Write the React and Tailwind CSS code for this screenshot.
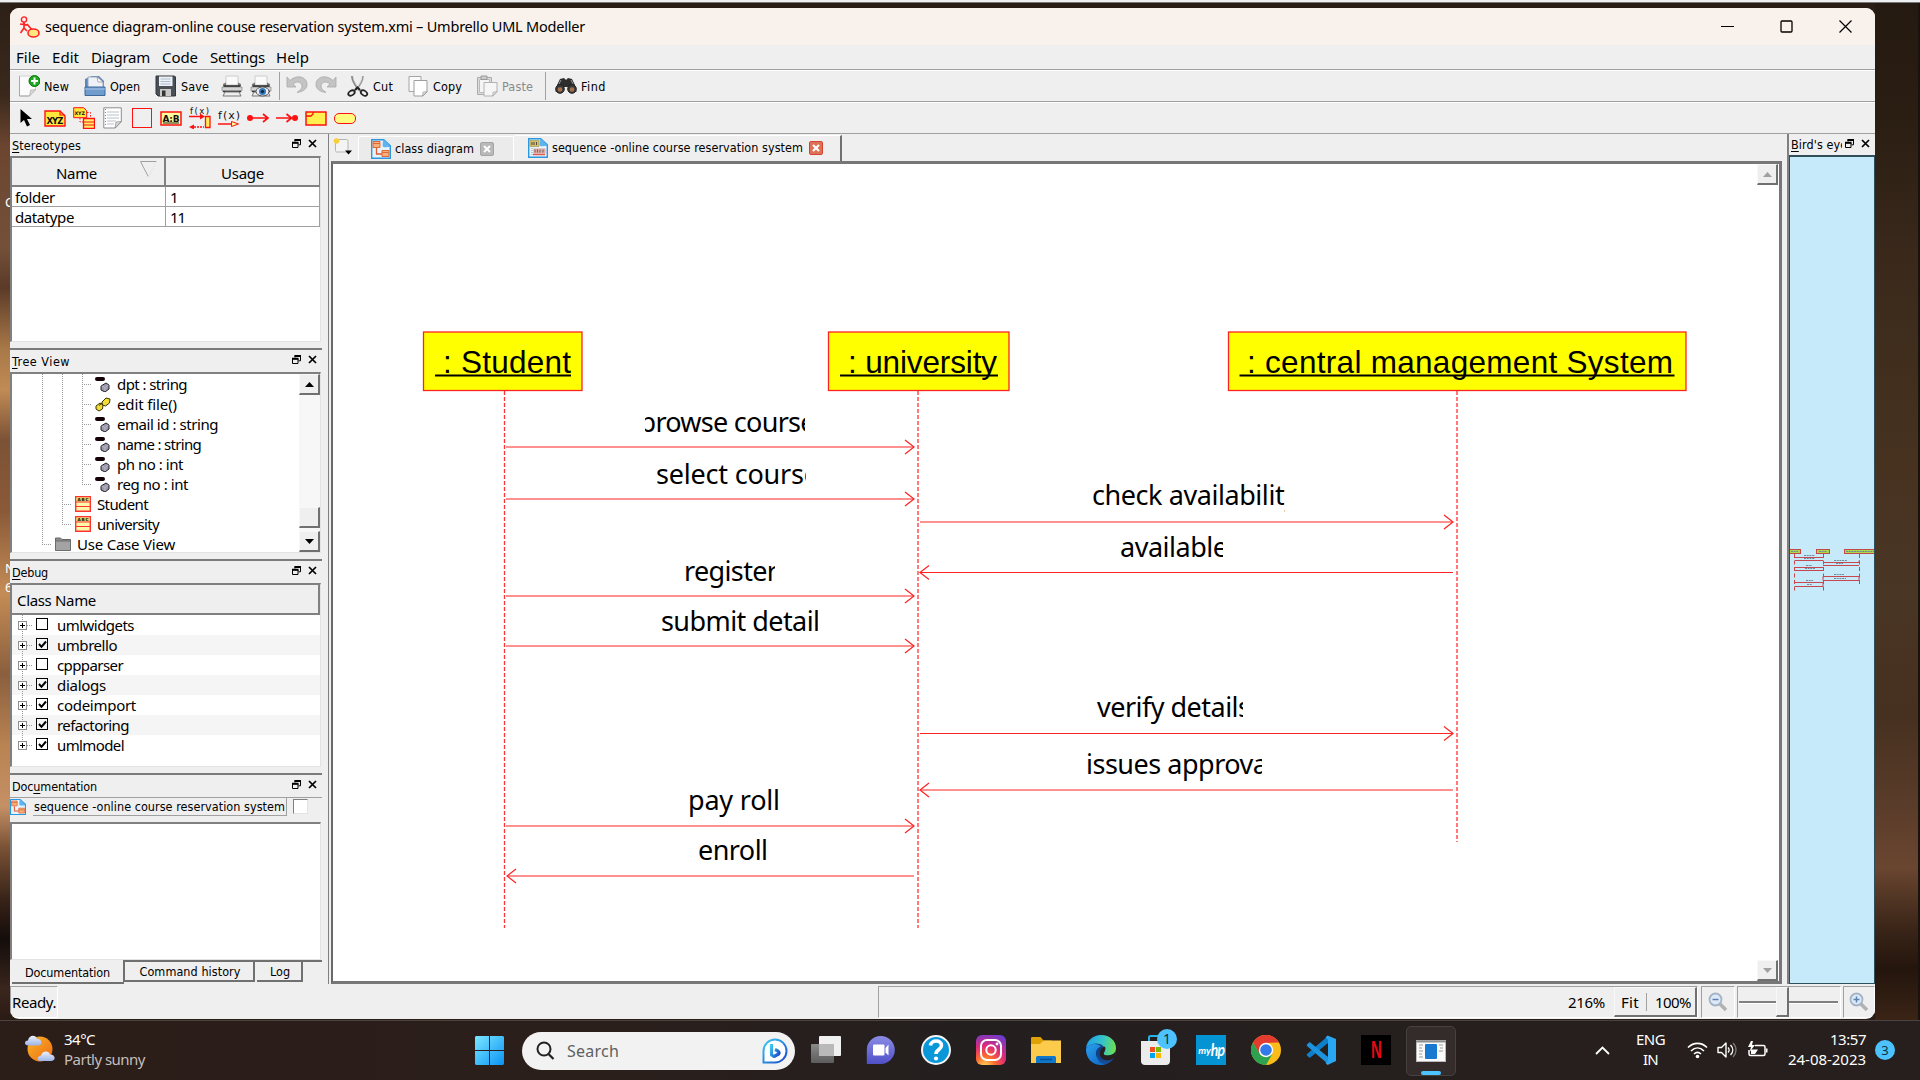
import React, { useLayoutEffect, useRef, useState } from "react";

/* Text run tracked so that it fills the given width */
function T({ w, className = "", children }) {
  const ref = useRef(null);
  const [ls, setLs] = useState(0);
  useLayoutEffect(() => {
    const el = ref.current;
    const n = el.textContent.length;
    if (w && n) setLs((w - el.getBoundingClientRect().width) / n);
  }, [w]);
  return (
    <span ref={ref} className={`inline-block shrink-0 whitespace-pre ${className}`} style={{ letterSpacing: ls }}>
      {children}
    </span>
  );
}

const Svg = ({ s = 22, w, h, className = "", children }) => (
  <svg width={w || s} height={h || s} viewBox={`0 0 ${w || s} ${h || s}`} className={`shrink-0 ${className}`} fill="none">
    {children}
  </svg>
);

/* ---------- application icons ---------- */
const AppIcon = () => (
  <Svg s={22}>
    <circle cx="5" cy="3.500" r="2.600" stroke="#f22" strokeWidth="1.400" />
    <path d="M5 6v6M1 8l8 1M5 12l-3.500 5M5 12l3 3M8 8l5 6" stroke="#f22" strokeWidth="1.600" />
    <ellipse cx="14.500" cy="17" rx="5.500" ry="4" fill="#ffe680" stroke="#f22" strokeWidth="1.600" />
  </Svg>
);
const NewIcon = () => (
  <Svg s={22}>
    <path d="M1.500 1h16v14l-6 6h-10z" fill="#fcfcfc" stroke="#d0d0d0" />
    <path d="M1.500 1v20h10" stroke="#a8a8a8" />
    <path d="M17.500 14.500l-6 6.500 1-6z" fill="#d8d8d8" stroke="#aaa" strokeWidth=".6" />
    <circle cx="16.500" cy="6" r="5.500" fill="#1fa51f" stroke="#087808" />
    <path d="M16.500 2.500v7M13 6h7" stroke="#fff" strokeWidth="2" />
  </Svg>
);
const OpenIcon = () => (
  <Svg s={22}>
    <path d="M1 4l7-3h7l5 5v8H1z" fill="#5c86b8" />
    <path d="M4 2h10l5 5v8H4z" fill="#eef2f8" stroke="#9ab" />
    <path d="M13 2l1 5 5 0z" fill="#fff" stroke="#889" strokeWidth=".7" />
    <path d="M1 12h20v8.500H1z" fill="#6f9bcd" stroke="#3d6898" />
    <path d="M1 14h20" stroke="#a6c6ea" />
  </Svg>
);
const SaveIcon = () => (
  <Svg s={22}>
    <path d="M1 1h18.500l1 1v19H3l-2-2z" fill="#4b4f56" stroke="#33363b" />
    <path d="M4 1.500h13.500V11H4z" fill="#eef2f7" />
    <path d="M5.500 4h10M5.500 6.500h10M5.500 9h10" stroke="#a9bbd0" />
    <path d="M5 14h11v7H5z" fill="#c8c8c8" />
    <path d="M7 15.500h3.500V21H7z" fill="#333" />
  </Svg>
);
const PrintIcon = ({ preview }) => (
  <Svg s={22}>
    <path d="M5 1h12v9H5z" fill="#fafafa" stroke="#ccc" />
    <path d="M2 9l3-1.500v3h12v-3L20 9v4H2z" fill="#777" />
    <path d="M1 12h20v4H1z" fill="#d5d5d5" stroke="#777" strokeWidth=".6" />
    <path d="M3 11h16M2 16.500h18" stroke="#333" strokeWidth="1.600" />
    <path d="M4 17h14l2 4H2z" fill="#eee" stroke="#777" />
    {preview && (
      <>
        <ellipse cx="12.500" cy="16.500" rx="6.500" ry="4.500" fill="#eef" stroke="#555" />
        <circle cx="12.500" cy="16.500" r="3.500" fill="#3478b8" />
        <circle cx="12.500" cy="16.500" r="1.500" fill="#123" />
      </>
    )}
  </Svg>
);
const UndoIcon = ({ flip }) => (
  <Svg s={22} className={flip ? "-scale-x-100" : ""}>
    <path d="M1 2v10l9 0-3-3c5-4 9-1 9 2 0 3-2 4-5 6.500 7-1 10-4 10-8 0-7-9-11-17-4z" fill="#c4c4c4" stroke="#a9a9a9" strokeWidth=".8" />
  </Svg>
);
const CutIcon = () => (
  <Svg s={22}>
    <path d="M5 1c0 5 3 9 6 13l4 3" stroke="#aaa" strokeWidth="2.200" />
    <path d="M16 1c0 5-3 9-6 13l-4 3" stroke="#c9c9c9" strokeWidth="2.200" />
    <path d="M5 1c0 5 3 9 6 13M16 1c0 5-3 9-6 13" stroke="#666" strokeWidth=".6" />
    <ellipse cx="4.500" cy="18" rx="3.500" ry="2.300" stroke="#222" strokeWidth="1.800" transform="rotate(-35 4.500 18)" />
    <ellipse cx="17" cy="18" rx="3.500" ry="2.300" stroke="#222" strokeWidth="1.800" transform="rotate(35 17 18)" />
    <path d="M8 15l2.500-2.500L13 15" stroke="#222" strokeWidth="2" />
  </Svg>
);
const CopyIcon = () => (
  <Svg s={22}>
    <path d="M2 1.500h12v15H2z" fill="#fbfbfb" stroke="#a5a5a5" />
    <path d="M7 5.500h13V17l-4 4H7z" fill="#fff" stroke="#9d9d9d" />
    <path d="M20 16.500L15.500 21l.5-4z" fill="#ddd" stroke="#999" strokeWidth=".6" />
  </Svg>
);
const PasteIcon = () => (
  <Svg s={22}>
    <path d="M1.500 2.500h14v17h-14z" fill="#ddd" stroke="#aaa" />
    <path d="M3.500 4.500h10v13h-10z" fill="#f5f5f5" stroke="#bbb" />
    <path d="M5 1h6v3.500H5z" fill="#ccc" stroke="#999" />
    <path d="M8 7.500h13V17l-4 4H8z" fill="#f6f6f6" stroke="#b3b3b3" />
    <path d="M21 16.500L16.500 21l.5-4z" fill="#ddd" stroke="#aaa" strokeWidth=".6" />
  </Svg>
);
const FindIcon = () => (
  <Svg s={22}>
    <path d="M5 4l4-1 2 2 2-2 4 1 3 6 1.500 7H14l-1-5h-4l-1 5H.5L2 10z" fill="#2d2d2d" />
    <circle cx="5" cy="14" r="4.300" fill="#3a3a3a" stroke="#222" />
    <circle cx="17" cy="14" r="4.300" fill="#3a3a3a" stroke="#222" />
    <circle cx="5" cy="14.500" r="2.300" fill="#a8704a" />
    <circle cx="17" cy="14.500" r="2.300" fill="#a8704a" />
    <path d="M6 5l-2 4M16 5l2 4" stroke="#999" />
  </Svg>
);

/* ---------- diagram tool icons ---------- */
const tiny = { fontFamily: "DejaVu Sans, sans-serif", fontWeight: 700, fill: "#111" };
const PointerIcon = () => (
  <Svg w={13} h={18}>
    <path d="M.5 0v14l3.500-3 3 6.500 3-1.500-3-6h5z" fill="#000" />
  </Svg>
);
const XyzIcon = () => (
  <Svg w={22} h={17}>
    <path d="M1 1h15l5 5v10H1z" fill="#ffe83c" stroke="#f11" strokeWidth="1.400" />
    <path d="M16 1v4h5" stroke="#f11" strokeWidth="1.200" />
    <text x="2.500" y="13.500" fontSize="8.500" textLength="17" {...tiny}>XYZ</text>
  </Svg>
);
const XyzClassIcon = () => (
  <Svg s={22}>
    <path d="M.7.700h10l3 3v7h-13z" fill="#ffe83c" stroke="#f11" />
    <text x="1.500" y="8" fontSize="4.800" textLength="10.500" {...tiny}>XYZ</text>
    <path d="M14 5.500h3.500v5M7 11v4h3" stroke="#f11" strokeDasharray="1.500 1.500" />
    <path d="M10.500 11.500h11v10h-11z" fill="#fff06a" stroke="#f11" strokeWidth="1.300" />
    <path d="M10.500 15h11M10.500 18h11" stroke="#f11" />
  </Svg>
);
const NoteIcon = () => (
  <Svg w={20} h={22}>
    <path d="M.8.800h17.500v14l-6 6.200H.8z" fill="#fff" stroke="#8d8d8d" />
    <path d="M4 5h12M4 8h12M4 11h12M4 14h9M4 17h7" stroke="#b9c0c8" />
    <path d="M2.500 2v18" stroke="#888" strokeDasharray="1 2" />
    <path d="M18.300 14.500L12 21l1-6z" fill="#d9d9d9" stroke="#888" strokeWidth=".7" />
  </Svg>
);
const AbIcon = () => (
  <Svg w={22} h={15}>
    <path d="M1 1h20v13H1z" fill="#fffa9a" stroke="#f11" strokeWidth="1.500" />
    <text x="2.500" y="10.500" fontSize="9" textLength="17" {...tiny}>A:B</text>
    <path d="M3 12h16" stroke="#222" />
  </Svg>
);
const FxSyncIcon = () => (
  <Svg s={22}>
    <text x="1" y="6.500" fontSize="8.500" textLength="19" {...tiny} fontWeight="400">f(x)</text>
    <path d="M0 9.500h12" stroke="#f11" strokeWidth="1.500" />
    <path d="M11 6.500l5 3-5 3z" fill="#f11" />
    <path d="M16.500 9.500h4.500v11h-4.500z" fill="#ffee55" stroke="#f11" strokeWidth="1.300" />
    <path d="M5 20h10" stroke="#f11" strokeWidth="1.500" strokeDasharray="2 1" />
    <path d="M5 17.500v5L0 20z" fill="#f11" />
  </Svg>
);
const FxIcon = () => (
  <Svg s={22}>
    <text x="0" y="11.500" fontSize="11" textLength="22" {...tiny} fontWeight="400">f(x)</text>
    <path d="M0 17h15" stroke="#f11" strokeWidth="1.500" />
    <path d="M13.500 14.500l7 2.500-7 2.500z" fill="#ff9" stroke="#f11" />
  </Svg>
);
const FoundIcon = () => (
  <Svg w={22} h={12}>
    <circle cx="3" cy="6" r="3" fill="#f11" />
    <path d="M3 6h18M16 2l5 4-5 4" stroke="#f11" strokeWidth="1.700" />
  </Svg>
);
const LostIcon = () => (
  <Svg w={22} h={12}>
    <circle cx="19" cy="6" r="3" fill="#f11" />
    <path d="M0 6h16M10.500 2l5 4-5 4" stroke="#f11" strokeWidth="1.700" />
  </Svg>
);
const FragmentIcon = () => (
  <Svg w={22} h={15}>
    <path d="M1 1h20v13H1z" fill="#fff04f" stroke="#f11" strokeWidth="1.500" />
    <path d="M1 5h5l2-2V1" stroke="#f11" strokeWidth="1.300" />
  </Svg>
);

const DiagramIcon = ({ s = 20, seq }) => (
  <svg width={s} height={s} viewBox="0 0 20 20" className="shrink-0" fill="none">
    <path d="M.7.700h12l6.600 6V19.300H.700z" fill="#e6f3fd" stroke="#2a97e0" strokeWidth="1.400" />
    <path d="M12 .700c0 4-1 6 0 7 1.500 1 4 .3 7.300.3C17 4 15 2 12 .700z" fill="#5db4ef" />
    {seq ? (
      <>
        <path d="M2 2.500h9v6H2z" fill="#d3c26a" stroke="#9c8b44" strokeWidth=".6" />
        <path d="M4 4v3M6 4v3M8.500 4v3" stroke="#544" />
        <path d="M4 10v8" stroke="#999" strokeDasharray="1 1" />
        <path d="M5.500 10.500h12v5h-12z" fill="#e0aaa2" />
        <path d="M7 11.500v3M9.500 11.500v3M12 11.500v3M15 11.500v3" stroke="#666" />
        <path d="M5 16.500h12" stroke="#e55a4f" strokeWidth="1.600" />
      </>
    ) : (
      <>
        <path d="M2 2.500h7v6H2zM11 11.500h7v6h-7z" fill="#f6b07c" stroke="#df6a36" />
        <path d="M2 4.500h7M11 13.500h7" stroke="#df6a36" />
        <path d="M5.500 9v6H11" stroke="#df5a30" strokeWidth="1.300" />
      </>
    )}
  </svg>
);

/* ---------- small window controls ---------- */
const FloatIcon = () => (
  <Svg s={9}>
    <path d="M3 .8h5.500v5H6.500M3 .5v2M.5 3.800h5.500v4.700H.5z" stroke="#000" />
    <path d="M2.500 1h6.500M0 3.700h6.500" stroke="#000" strokeWidth="2" />
  </Svg>
);
const CloseIcon = () => (
  <Svg s={9}>
    <path d="M1 1l7 7M8 1l-7 7" stroke="#000" strokeWidth="1.700" />
  </Svg>
);

const tah = "font-['DejaVu_Sans_Condensed','Noto_Sans',sans-serif] text-[12.500px] leading-[16px]";

function DockTitle({ h, children }) {
  return (
    <div className={`flex shrink-0 items-center bg-[#efefef] pt-px pr-[5px] pl-[2px] text-black ${h}`}>
      {children}
      <div className="mb-[4px] ml-auto flex gap-[7px]">
        <FloatIcon />
        <CloseIcon />
      </div>
    </div>
  );
}

const raised = "border-t border-l border-r-2 border-b-2 border-t-[#f8f8f8] border-l-[#f8f8f8] border-r-[#707070] border-b-[#707070] bg-[#efefef]";

function ArrowButton({ down, gray, size }) {
  const c = gray ? "#a0a0a0" : "#000";
  return (
    <div className={`flex items-center justify-center ${raised} ${size}`}>
      <Svg w={9} h={5}>
        <path d={down ? "M0 0h9L4.500 5z" : "M0 5h9L4.500 0z"} fill={c} />
      </Svg>
    </div>
  );
}

/* ---------- tree ---------- */
function Guide({ kind }) {
  return (
    <Svg s={20}>
      <path d={kind === "elbow" ? "M10.500 0v11" : "M10.500 0v20"} stroke="#9a9a9a" strokeDasharray="1 1" />
      {kind !== "line" && <path d="M10 10.500h10" stroke="#9a9a9a" strokeDasharray="1 1" />}
    </Svg>
  );
}
const AttrIcon = () => (
  <Svg s={16}>
    <rect x="0" y="1" width="10" height="4" rx="2" fill="#120006" />
    <path d="M6 10l5-3 3 2v4l-4 3-4-2z" fill="#9a97ac" stroke="#222" />
    <path d="M6.500 10l3.500 1.500 3.500-2.500M10 11.500V15" stroke="#c5c3d2" strokeWidth=".7" />
  </Svg>
);
const OpIcon = () => (
  <Svg s={16}>
    <path d="M1 10l4-3 3 2-.5 4-3.500 2-3-2z" fill="#f2dc3c" stroke="#3a3500" />
    <path d="M7 6l4-4 4 1-.5 4-4 3-3-1z" fill="#f2dc3c" stroke="#3a3500" />
    <path d="M4 9.500l3-2.500" stroke="#3a3500" />
  </Svg>
);
const ClassIcon = () => (
  <Svg s={16}>
    <path d="M.7.700h14.600v14.600H.7z" fill="#fff8a8" stroke="#f33" strokeWidth="1.400" />
    <path d="M1.400 1.400h13.200v4H1.400z" fill="#e8d060" />
    <text x="2.500" y="5" fontSize="4.200" textLength="11" {...tiny}>ABC</text>
    <path d="M1 6h14M1 10.500h14" stroke="#f33" strokeWidth="1.200" />
  </Svg>
);
const FolderGrayIcon = () => (
  <Svg s={16}>
    <path d="M.5 2h5l1.500 1.500h8.500V14H.5z" fill="#8c8c8c" stroke="#666" />
    <path d="M.5 5h15v9.500H.5z" fill="#a3a3a3" stroke="#6d6d6d" />
  </Svg>
);
const tree = [
  { g: ["line", "line", "tee"], icon: <AttrIcon />, t: "dpt : string", w: 70 },
  { g: ["line", "line", "tee"], icon: <OpIcon />, t: "edit file()", w: 60 },
  { g: ["line", "line", "tee"], icon: <AttrIcon />, t: "email id : string", w: 101 },
  { g: ["line", "line", "tee"], icon: <AttrIcon />, t: "name : string", w: 84 },
  { g: ["line", "line", "tee"], icon: <AttrIcon />, t: "ph no : int", w: 66 },
  { g: ["line", "line", "elbow"], icon: <AttrIcon />, t: "reg no : int", w: 71 },
  { g: ["line", "tee"], icon: <ClassIcon />, t: "Student", w: 51 },
  { g: ["line", "elbow"], icon: <ClassIcon />, t: "university", w: 62 },
  { g: ["elbow"], icon: <FolderGrayIcon />, t: "Use Case View", w: 98 },
];
const debug = [
  ["umlwidgets", false, 77],
  ["umbrello", true, 60],
  ["cppparser", false, 66],
  ["dialogs", true, 49],
  ["codeimport", true, 79],
  ["refactoring", true, 72],
  ["umlmodel", true, 67],
];

/* ---------- sequence diagram ---------- */
const objects = [
  { x: 423.5, w: 158.500, tx: 443, label: ": Student", tw: 128, ux: 435, uw: 136 },
  { x: 828.5, w: 180.500, tx: 848, label: ": university", tw: 149, ux: 840, uw: 158 },
  { x: 1228.5, w: 457.500, tx: 1247, label: ": central management System", tw: 426, ux: 1239.5, uw: 435 },
];
const messages = [
  { t: "browse course", x: 639.5, w: 176, y: 432, c0: 645, c1: 805 },
  { t: "select course", x: 656, w: 163, y: 483.500, c0: 650, c1: 806 },
  { t: "register", x: 684, w: 94, y: 581, c0: 680, c1: 775 },
  { t: "submit detail", x: 661, w: 159, y: 631, c0: 655, c1: 818 },
  { t: "check availability", x: 1092, w: 206, y: 504.500, c0: 1085, c1: 1284.5 },
  { t: "available", x: 1120, w: 108, y: 557, c0: 1115, c1: 1223 },
  { t: "verify details", x: 1097, w: 154, y: 717, c0: 1090, c1: 1243 },
  { t: "issues approva", x: 1086, w: 182, y: 774, c0: 1080, c1: 1262 },
  { t: "pay roll", x: 688, w: 92, y: 810, c0: 680, c1: 785 },
  { t: "enroll", x: 698, w: 70, y: 860, c0: 690, c1: 775 },
];
const arrows = [
  [506, 914, 447], [506, 914, 499], [920, 1453, 522], [1453, 920, 572.5], [506, 914, 596],
  [506, 914, 646], [920, 1453, 733.5], [1453, 920, 790], [506, 914, 826], [914, 507, 876],
];
function Diagram() {
  return (
    <svg width="1424" height="817" viewBox="333 164 1424 817" className="shrink-0" fill="none">
      {[[504.500, 928], [918, 928], [1457, 842]].map(([x, y]) => (
        <path key={x} d={`M${x} 391V${y}`} stroke="#f33" strokeWidth="1.300" strokeDasharray="4 2" />
      ))}
      {objects.map((o) => (
        <g key={o.label}>
          <rect x={o.x} y="332" width={o.w} height="58.500" fill="#ff0" stroke="#f22" strokeWidth="1.300" />
          <text x={o.tx} y="373" fontSize="31.500" fontFamily="Liberation Sans, Arial, sans-serif" fill="#000" textLength={o.tw}>{o.label}</text>
          <path d={`M${o.ux} 375.500h${o.uw}`} stroke="#000" strokeWidth="2" />
        </g>
      ))}
      {arrows.map(([a, b, y]) => {
        const d = b > a ? -1 : 1;
        return (
          <g key={y} stroke="#f22" strokeWidth="1.200">
            <path d={`M${a} ${y}H${b}`} />
            <path d={`M${b + 9 * d} ${y - 7}L${b} ${y}L${b + 9 * d} ${y + 7}`} />
          </g>
        );
      })}
      {messages.map((m, i) => (
        <g key={m.t}>
          <clipPath id={`c${i}`}>
            <rect x={m.c0} y={m.y - 30} width={m.c1 - m.c0} height="42" />
          </clipPath>
          <text x={m.x} y={m.y} clipPath={`url(#c${i})`} fontSize="27" textLength={m.w} fill="#000" fontFamily="Noto Sans, sans-serif">{m.t}</text>
        </g>
      ))}
    </svg>
  );
}

function Birdseye() {
  return (
    <svg width="84" height="826" viewBox="1790 157 84 826" className="shrink-0" fill="none">
      <g fill="#a9d84a" stroke="#c8474f">
        <rect x="1786.5" y="549.5" width="14" height="4" />
        <rect x="1816.5" y="549.5" width="13" height="4" />
        <rect x="1844.5" y="549.5" width="34" height="4" />
      </g>
      <g stroke="#c8474f">
        <path d="M1794.5 554v37M1823.5 554v37M1859.5 554v30" strokeDasharray="4 2.500" />
        <path d="M1795 557.5h28M1795 560.5h28M1795 567.5h28M1795 570.5h28M1795 582.5h28M1795 586.5h28v-4M1823 562.5h36v-2M1823 565.5h36M1823 576.5h36v4h-36z" />
      </g>
      <g stroke="#6d8a99" strokeDasharray="2 .7">
        <path d="M1804 555.5h11M1804 558.5h11M1806 565.5h6M1805 568.5h10M1834 560.5h13M1836 563.5h7M1834 574.5h10M1834 578.5h12M1806 580.5h7M1807 584.5h5" />
        <path d="M1791 551.5h7M1819 551.5h8M1846 551.5h28" />
      </g>
    </svg>
  );
}

/* ---------- taskbar ---------- */
const Weather = () => (
  <Svg s={30}>
    <defs>
      <linearGradient id="sun" x1="0" y1="0" x2="1" y2="1"><stop stopColor="#f9b52a" /><stop offset="1" stopColor="#ee6a12" /></linearGradient>
      <linearGradient id="cl" x1="0" y1="0" x2="0" y2="1"><stop stopColor="#eaf1fd" /><stop offset="1" stopColor="#9db4e6" /></linearGradient>
    </defs>
    <circle cx="15" cy="15" r="12.500" fill="url(#sun)" />
    <path d="M3 11.500c-4 0-4-5 0-5 1-6 8-6 9-1.500 5-1 6 6.500 1 6.500z" fill="url(#cl)" />
    <path d="M16 27c-5 0-4-5 0-5.500 1-5 8-5 9-1 6 0 6 6.500 1 6.500z" fill="url(#cl)" />
  </Svg>
);
const WinIcon = () => (
  <Svg s={29}>
    <defs><linearGradient id="wn" x1="0" y1="0" x2="1" y2="1"><stop stopColor="#7be6ff" /><stop offset="1" stopColor="#0a93f5" /></linearGradient></defs>
    <path d="M1 0h13v14H0V1zM15 0h13l1 1v13H15zM0 15h14v14H1l-1-1zM15 15h14v13l-1 1H15z" fill="url(#wn)" />
  </Svg>
);
const BingIcon = () => (
  <Svg s={26}>
    <defs><linearGradient id="bg" x1="0" y1="0" x2="1" y2="1"><stop stopColor="#3ccdf5" /><stop offset="1" stopColor="#1b48c8" /></linearGradient></defs>
    <path d="M1.500 24.500V13A11.500 11.500 0 1 1 13 24.500z" fill="#fff" stroke="url(#bg)" strokeWidth="2" />
    <path d="M9.500 6v11l2.500 1.500 4.500-2.500c1.500-1.500 0-3-3.500-4.500" stroke="url(#bg)" strokeWidth="3.200" strokeLinejoin="round" />
  </Svg>
);
const TaskViewIcon = () => (
  <Svg s={30}>
    <defs><linearGradient id="tv" x1="0" y1="0" x2="0" y2="1"><stop stopColor="#8a8a8a" /><stop offset="1" stopColor="#5c5c5c" /></linearGradient></defs>
    <rect x="0" y="9" width="23" height="19" rx="1" fill="url(#tv)" />
    <rect x="8" y="1" width="22" height="20" rx="1" fill="#f0f0f0" />
    <rect x="8" y="9" width="15" height="12" fill="#b9b9b9" />
  </Svg>
);
const ChatIcon = () => (
  <Svg s={30}>
    <defs><linearGradient id="ch" x1="0" y1="0" x2="0" y2="1"><stop stopColor="#8a8ce4" /><stop offset="1" stopColor="#5050c8" /></linearGradient></defs>
    <path d="M.8 29V15A14 14 0 1 1 15 29z" fill="url(#ch)" />
    <rect x="7" y="9.500" width="11.500" height="11" rx="1" fill="#fff" />
    <path d="M19.500 13l3-3.500v11l-3-3z" fill="#fff" />
  </Svg>
);
const HelpIcon = () => (
  <Svg s={30}>
    <circle cx="15" cy="15" r="14" fill="#0a97d9" stroke="#f4f4f4" strokeWidth="2" />
    <path d="M9.500 10.500c.5-6 11-6 11 0 0 4-5.500 4-5.500 8.500" stroke="#fff" strokeWidth="3.600" />
    <circle cx="15" cy="23.500" r="2.100" fill="#fff" />
  </Svg>
);
const InstaIcon = () => (
  <Svg s={30}>
    <defs><radialGradient id="ig" cx=".3" cy="1.050" r="1.150"><stop stopColor="#ffdc5e" /><stop offset=".3" stopColor="#fb6a2c" /><stop offset=".6" stopColor="#dd2a7b" /><stop offset="1" stopColor="#6a3bd0" /></radialGradient></defs>
    <rect width="30" height="30" rx="6" fill="url(#ig)" />
    <rect x="5" y="5" width="20" height="20" rx="6" stroke="#fff" strokeWidth="2" />
    <circle cx="15" cy="15" r="4.700" stroke="#fff" strokeWidth="2" />
    <circle cx="21" cy="9" r="1.400" fill="#fff" />
  </Svg>
);
const ExplorerIcon = () => (
  <Svg s={30}>
    <path d="M0 3.500c0-1 .5-1.500 1.500-1.500h8l3 3.500h8V12H0z" fill="#e0a106" />
    <path d="M0 9h9l3.500-3.500H30V28H0z" fill="#fccb4b" />
    <path d="M5 28v-5.500c0-1 1-1.500 2-1.500h16c1 0 2 .5 2 1.500V28z" fill="#0f78cc" />
    <path d="M9 24.500h12" stroke="#0a4f93" strokeWidth="1.500" />
  </Svg>
);
const EdgeIcon = () => (
  <Svg s={30}>
    <defs>
      <linearGradient id="e1" x1="0" y1=".3" x2="1" y2=".4"><stop stopColor="#1f9fe8" /><stop offset=".55" stopColor="#35c3c8" /><stop offset="1" stopColor="#6be052" /></linearGradient>
      <linearGradient id="e2" x1="0" y1="0" x2="1" y2="1"><stop stopColor="#2aa0ee" /><stop offset="1" stopColor="#0b5fc0" /></linearGradient>
    </defs>
    <circle cx="15" cy="15" r="15" fill="#123f82" />
    <path d="M0 13C1 5 8 0 15 0c9 0 15 6 15 13 0 6-5 7.500-9 7.500-3 0-4-1.500-3-2.800 1-1.200 1-2.200 1-2.700C19 9 8 5 0 13z" fill="url(#e1)" />
    <path d="M0 14c4-7 13-5.500 15-2.500-5 1-7 8-3 12.500 3 3.500 8 4 12 2.500-3 3-7 3.500-10 3.500C6 29.500 0 23 0 14z" fill="url(#e2)" />
    <path d="M19 11.500c1 2.500 0 4-1 5.500-1 1.800 0 3.500 3 3.500 3.500 0 6-.8 8-3l1 5-2 2c-5 2-15 1-14-7 .3-3 2-5 5-6z" fill="#271f1d" />
    <path d="M14.500 11.500c-6 5-3 13 4 14 4 .5 7-.8 9.500-2.500-3 4.500-7 6-10 5.800C11 28 8 18 14.500 11.500z" fill="#164b96" />
  </Svg>
);
const StoreIcon = () => (
  <div className="relative h-[30px] w-[30px]">
    <Svg s={30}>
      <path d="M8 6V2.500C8 1.500 8.500 1 9.500 1h10c1 0 1.500.5 1.500 1.500V6" stroke="#27b0ea" strokeWidth="2" />
      <path d="M0 6h29v20c0 2.500-1.500 4-4 4H4c-2.500 0-4-1.500-4-4z" fill="#ececec" />
      <path d="M9 12h5v5H9z" fill="#f25022" /><path d="M15 12h5v5h-5z" fill="#7fba00" />
      <path d="M9 18h5v5H9z" fill="#00a4ef" /><path d="M15 18h5v5h-5z" fill="#ffb900" />
    </Svg>
    <div className="absolute -top-[6px] left-[16px] flex h-[20px] w-[20px] items-center justify-center rounded-full bg-[#4cc2ff] text-[14px] leading-[20px] text-[#1c2b33]">1</div>
  </div>
);
const ChromeIcon = () => (
  <Svg s={30}>
    <circle cx="15" cy="15" r="15" fill="#fbbc1a" />
    <path d="M15 8L28 7.500A15 15 0 0 0 2 7.500l6.500 11.500z" fill="#e33b2e" />
    <path d="M2 7.500A15 15 0 0 0 15 30l6.500-11.200L15 22c-3 0-5.500-1.500-6.500-3.500z" fill="#2da350" />
    <circle cx="15" cy="15" r="7.200" fill="#fff" />
    <circle cx="15" cy="15" r="5.800" fill="#3279ea" />
  </Svg>
);
const CodeIcon = () => (
  <Svg s={30}>
    <path d="M1 20.500l1.800 1.800c.6.500 1.300.4 1.800 0L22 8V1L1 19c-.5.500-.5 1 0 1.500z" fill="#0f7fcc" />
    <path d="M1 9.500l1.800-1.800c.6-.5 1.300-.4 1.800 0L22 22v7L1 11c-.5-.5-.5-1 0-1.500z" fill="#1e93dd" />
    <path d="M21.500.5L30 4v22l-8.500 4-2-2 2.500-2V4.500l-2.500-2z" fill="#2aa7f2" />
  </Svg>
);
const AppWindowIcon = () => (
  <Svg w={30} h={22}>
    <rect x=".5" y=".5" width="29" height="21" fill="#fafafa" stroke="#b9b9b9" />
    <path d="M0 1.500h30" stroke="#8e8e8e" strokeWidth="2" />
    <rect x="9" y="4" width="12" height="15" rx="1" fill="#1779cf" />
    <path d="M3 5h4M3 8h3M3 11h4M3 14h3M3 17h4M23 5h4M24 8h3M23 11h4" stroke="#999" />
  </Svg>
);

const MagIcon = ({ plus }) => (
  <Svg s={20}>
    <path d="M11 11l7 7" stroke="#b2b2b2" strokeWidth="3.500" />
    <circle cx="7.500" cy="7.500" r="6" fill="#dce9f6" stroke="#a4b4c6" strokeWidth="1.800" />
    <path d={plus ? "M4.500 7.500h6M7.500 4.500v6" : "M4.500 7.500h6"} stroke="#5d82b0" strokeWidth="1.500" />
  </Svg>
);
const sunk = "shrink-0 border-t border-l border-r border-b border-t-[#a0a0a0] border-l-[#a0a0a0] border-r-white border-b-white";

export default function App() {
  return (
    <div className="flex h-[1080px] w-[1920px] flex-col overflow-hidden bg-[#2a1d14] font-['Noto_Sans',sans-serif] text-[15px] text-black">
      <div className="h-[3px] shrink-0 border-b border-[#777] bg-[#eef0f2]" />
      <div className="flex h-[1017px] shrink-0">
        <div className="flex w-[10px] shrink-0 flex-col overflow-hidden bg-[linear-gradient(180deg,#2d2016_0%,#3a281c_9%,#6b4530_14%,#74503a_24%,#5a3b28_28%,#a87848_34%,#c08b55_38%,#7c5236_43%,#8a5a38_50%,#c48c55_58%,#8a5f3e_66%,#b98352_73%,#c49065_79%,#7a5236_83%,#3a2418_88%,#140d0b_92%,#3a261d_97%,#2a1a14_100%)] pl-[5px] text-[13px] leading-[19px] text-white">
          <span className="mt-[190px]">C</span>
          <span className="mt-[347px]">N</span>
          <span>6</span>
        </div>

        {/* application window */}
        <div className="mt-[5px] flex h-[1011px] w-[1865px] shrink-0 flex-col overflow-hidden rounded-[9px] bg-[#efefef]">
          <div className="flex h-[37px] shrink-0 items-center bg-[#f9f1eb] pl-[9px]">
            <AppIcon />
            <T w={540} className="ml-[4px] text-[14.500px]">sequence diagram-online couse reservation system.xmi – Umbrello UML Modeller</T>
            <div className="mr-[23px] ml-auto flex items-center gap-[46px]">
              <Svg s={13}><path d="M0 6.500h13" stroke="#000" strokeWidth="1.200" /></Svg>
              <Svg s={13}><rect x="1" y="1" width="11" height="11" rx="1" stroke="#000" strokeWidth="1.300" /></Svg>
              <Svg s={13}><path d="M.5.500l12 12M12.500.500l-12 12" stroke="#000" strokeWidth="1.200" /></Svg>
            </div>
          </div>

          <div className="flex h-[25px] shrink-0 items-center border-b border-[#a0a0a0] pl-[6px] text-[15px]">
            <T w={24}>File</T>
            <T w={27} className="ml-[12px]">Edit</T>
            <T w={59} className="ml-[12px]">Diagram</T>
            <T w={36} className="ml-[12px]">Code</T>
            <T w={55} className="ml-[12px]">Settings</T>
            <T w={33} className="ml-[11px]">Help</T>
          </div>

          <div className={`flex h-[32px] shrink-0 items-center border-t border-b border-t-white border-b-[#a0a0a0] pl-[8px] ${tah}`}>
            <NewIcon /><T w={25} className="ml-[4px] pt-[2px]">New</T>
            <span className="ml-[15px] flex"><OpenIcon /></span><T w={30} className="ml-[4px] pt-[2px]">Open</T>
            <span className="ml-[15px] flex"><SaveIcon /></span><T w={28} className="ml-[4px] pt-[2px]">Save</T>
            <span className="ml-[12px] flex"><PrintIcon /></span>
            <span className="ml-[7px] flex"><PrintIcon preview /></span>
            <span className="ml-[7px] h-[28px] w-px bg-[#a0a0a0]" />
            <span className="ml-[6px] flex"><UndoIcon /></span>
            <span className="ml-[7px] flex"><UndoIcon flip /></span>
            <span className="ml-[10px] flex"><CutIcon /></span><T w={20} className="ml-[4px] pt-[2px]">Cut</T>
            <span className="ml-[14px] flex"><CopyIcon /></span><T w={29} className="ml-[4px] pt-[2px]">Copy</T>
            <span className="ml-[14px] flex"><PasteIcon /></span><T w={31} className="ml-[4px] pt-[2px] text-[#8a8a8a]">Paste</T>
            <span className="ml-[12px] h-[28px] w-px bg-[#a0a0a0]" />
            <span className="ml-[9px] flex"><FindIcon /></span><T w={25} className="ml-[4px] pt-[2px]">Find</T>
          </div>

          <div className="flex h-[32px] shrink-0 items-center gap-[7px] border-t border-b border-t-white border-b-[#a0a0a0] pl-[10px]">
            <PointerIcon />
            <span className="ml-[4px] flex"><XyzIcon /></span>
            <XyzClassIcon />
            <span className="ml-px flex"><NoteIcon /></span>
            <span className="ml-[2px] h-[20px] w-[20px] border border-[#f11]" />
            <span className="ml-[1px] flex"><AbIcon /></span>
            <FxSyncIcon />
            <FxIcon />
            <FoundIcon />
            <LostIcon />
            <FragmentIcon />
            <span className="h-[11px] w-[22px] rounded-[5px] border-[1.500px] border-[#f11] bg-[#fffa80]" />
          </div>

          <div className="flex h-[850px] shrink-0">
            {/* left docks */}
            <div className={`flex w-[312px] shrink-0 flex-col ${tah}`}>
              <DockTitle h="h-[22px]"><T w={69}><span className="underline underline-offset-2">S</span>tereotypes</T></DockTitle>
              <div className="mr-px flex h-[186px] shrink-0 flex-col border-t-2 border-l-2 border-r border-b border-t-[#808080] border-l-[#808080] border-r-[#e3e3e3] border-b-[#e3e3e3] bg-white font-['Noto_Sans',sans-serif] text-[15px] leading-[18px]">
                <div className="flex h-[29px]">
                  <div className="flex w-[154px] items-center border-r-2 border-b-2 border-[#808080] bg-[#efefef] pt-[2px] pl-[44px]">
                    <T w={41}>Name</T>
                    <Svg w={17} h={17} className="mb-[6px] ml-[43px]"><path d="M.5.500h16L8.500 16z" stroke="#a0a0a0" /><path d="M16.500.500L8.500 16" stroke="#fff" /></Svg>
                  </div>
                  <div className="flex flex-1 items-center justify-center border-r border-b-2 border-[#808080] bg-[#efefef] pt-[2px]"><T w={43}>Usage</T></div>
                </div>
                {[["folder", "1", 40, 7], ["datatype", "11", 59, 15]].map(([a, b, w, v]) => (
                  <div key={a} className="flex h-[20px]">
                    <div className="flex w-[154px] items-center border-r border-b border-[#a0a0a0] pl-[3px]"><T w={w}>{a}</T></div>
                    <div className="flex flex-1 items-center border-r border-b border-[#a0a0a0] pl-[4px]"><T w={v}>{b}</T></div>
                  </div>
                ))}
              </div>
              <div className="mt-[6px] border-b-2 border-[#7b7b7b]" />
              <DockTitle h="h-[22px]"><T w={58}><span className="underline underline-offset-2">T</span>ree View</T></DockTitle>
              <div className="mr-px flex h-[181px] shrink-0 overflow-hidden border-t-2 border-l-2 border-r border-b border-t-[#808080] border-l-[#808080] border-r-[#e3e3e3] border-b-[#e3e3e3] bg-white font-['Noto_Sans',sans-serif] text-[15px] leading-[20px]">
                <div className="flex h-[178px] flex-1 flex-col overflow-hidden pl-[20px]">
                  {tree.map((r) => (
                    <div key={r.t} className="flex h-[20px] shrink-0 items-center">
                      {r.g.map((g, i) => <Guide key={i} kind={g} />)}
                      <span className="ml-[3px] flex">{r.icon}</span>
                      <T w={r.w} className="ml-[6px]">{r.t}</T>
                    </div>
                  ))}
                </div>
                <div className="flex w-[21px] flex-col bg-[#f7f7f7]">
                  <ArrowButton size="h-[21px] w-[21px]" />
                  <div className={`mt-[112px] h-[21px] w-[21px] ${raised}`} />
                  <div className="mt-[3px]"><ArrowButton down size="h-[21px] w-[21px]" /></div>
                </div>
              </div>
              <div className="mt-[6px] border-b-2 border-[#7b7b7b]" />
              <DockTitle h="h-[22px]"><T w={36}><span className="underline underline-offset-2">D</span>ebug</T></DockTitle>
              <div className="mr-px flex h-[184px] shrink-0 flex-col border-t-2 border-l-2 border-r border-b border-t-[#808080] border-l-[#808080] border-r-[#e3e3e3] border-b-[#e3e3e3] bg-white font-['Noto_Sans',sans-serif] text-[15px] leading-[20px]">
                <div className="flex h-[30px] items-center border-r-2 border-b-2 border-[#808080] bg-[#efefef] pt-[2px] pl-[5px]"><T w={79}>Class Name</T></div>
                {debug.map(([t, on, w], i) => (
                  <div key={t} className={`flex h-[20px] items-center pl-[6px] ${i % 2 ? "bg-[#f5f5f5]" : ""}`}>
                    <Svg s={20} className="-mr-[2px]">
                      <path d={i === 6 ? "M4.500 0v8" : "M4.500 0v20"} stroke="#9a9a9a" strokeDasharray="1 1" />
                      <path d="M9 10.500h6" stroke="#9a9a9a" strokeDasharray="1 1" />
                      <rect x=".5" y="6.500" width="8" height="8" fill="#fff" stroke="#909090" />
                      <path d="M2 10.500h5M4.500 8v5" stroke="#000" />
                    </Svg>
                    <span className="mb-[2px] flex h-[12px] w-[12px] items-center justify-center border border-black">
                      {on && <Svg s={9}><path d="M1 4l2.500 2.800L8 1.500" stroke="#000" strokeWidth="2" /></Svg>}
                    </span>
                    <T w={w} className="ml-[9px]">{t}</T>
                  </div>
                ))}
              </div>
              <div className="mt-[6px] border-b-2 border-[#7b7b7b]" />
              <DockTitle h="h-[22px]"><T w={85}>Doc<span className="underline underline-offset-2">u</span>mentation</T></DockTitle>
              <div className="flex h-[25px] shrink-0 items-start border-t border-[#a0a0a0]">
                <span className="mt-px flex"><DiagramIcon s={16} /></span>
                <div className="ml-[7px] flex h-[18px] items-center border-r border-b border-[#a0a0a0] pr-[1px] pl-[1px]"><T w={251}>sequence -online course reservation system</T></div>
                <span className="mt-px ml-[6px] h-[15px] w-[15px] border border-[#808080] border-r-[#e3e3e3] border-b-[#e3e3e3] bg-white" />
              </div>
              <div className="mr-px h-[138px] shrink-0 border-t-2 border-l-2 border-r border-b border-t-[#808080] border-l-[#808080] border-r-[#e3e3e3] border-b-[#e3e3e3] bg-white" />
              <div className="flex h-[24px] shrink-0 items-start">
                <div className="ml-[2px] flex h-[24px] w-[112px] items-center justify-center border-r border-b-2 border-[#707070] pt-[4px]"><T w={85}>Documentation</T></div>
                <div className="flex h-[22px] w-[131px] items-center justify-center border-t-2 border-r-2 border-b-2 border-l border-[#707070] pt-px pl-[2px]"><T w={101}>Command history</T></div>
                <div className="flex h-[22px] flex-1 items-start border-t-2 border-[#707070]">
                  <div className="ml-[2px] flex h-[20px] w-[46px] items-center justify-center border-r-2 border-b-2 border-[#707070] pt-px pl-[2px]"><T w={20}>Log</T></div>
                </div>
              </div>
            </div>

            {/* documents */}
            <div className={`ml-[6px] flex w-[1454px] shrink-0 flex-col border-l border-[#808080] ${tah}`}>
              <div className="flex h-[27px] items-end pl-[4px]">
                <Svg w={20} h={19} className="mb-[5px]">
                  <path d="M2.500 2.500h11c1 0 1.500.5 1.500 1.500v11h-11c-1 0-1.500-.5-1.500-1.500z" fill="#f4f4f4" stroke="#b5b5b5" />
                  <circle cx="3.500" cy="4" r="2.800" fill="#f7cf3d" />
                  <path d="M12 13.500h7l-3.500 4z" fill="#000" />
                </Svg>
                <div className="ml-[5px] flex h-[25px] w-[156px] items-center rounded-tl-[2px] border-t border-r border-l border-white bg-[#ebebeb] pl-[12px]">
                  <DiagramIcon />
                  <T w={79} className="ml-[4px]">class diagram</T>
                  <span className="ml-[6px] flex h-[14px] w-[14px] items-center justify-center rounded-[2px] border border-[#a5a5a5] bg-[#b9b9b9]"><Svg s={8}><path d="M1 1l6 6M7 1l-6 6" stroke="#fff" strokeWidth="2" /></Svg></span>
                </div>
                <div className="flex h-[26px] w-[328px] items-center rounded-tl-[2px] border-t border-r-2 border-t-white border-r-[#707070] pb-[2px] pl-[14px]">
                  <DiagramIcon seq />
                  <T w={251} className="ml-[4px] pt-px">sequence -online course reservation system</T>
                  <span className="ml-[6px] flex h-[14px] w-[14px] items-center justify-center rounded-[2px] border border-[#d4452e] bg-[#dd7258]"><Svg s={8}><path d="M1 1l6 6M7 1l-6 6" stroke="#fff" strokeWidth="2" /></Svg></span>
                </div>
              </div>
              <div className="ml-[2px] flex h-[823px] border-t-[3px] border-r-[3px] border-b-[3px] border-l-2 border-t-[#777] border-r-[#777] border-b-[#777] border-l-[#696969] bg-white">
                <Diagram />
                <div className="flex w-[21px] shrink-0 flex-col justify-between">
                  <ArrowButton gray size="h-[21px] w-[21px]" />
                  <ArrowButton gray down size="h-[21px] w-[21px]" />
                </div>
              </div>
            </div>

            {/* bird's eye dock */}
            <div className={`ml-auto flex w-[88px] shrink-0 flex-col border-l-2 border-[#808080] ${tah}`}>
              <DockTitle h="h-[21px]">
                <span className="flex w-[51px] overflow-hidden"><T w={70}><span className="underline underline-offset-2">B</span>ird's eye vi</T></span>
              </DockTitle>
              <div className="flex h-[829px] overflow-hidden border-t-2 border-r border-b border-l border-[#2f4f5a] bg-[#c7eafb]"><Birdseye /></div>
            </div>
          </div>

          {/* status bar */}
          <div className="flex h-[35px] shrink-0 items-start pt-[2px] text-[15px] leading-[20px]">
            <div className={`flex h-[32px] w-[48px] items-center pl-px ${sunk}`}><T w={44}>Ready.</T></div>
            <div className={`ml-[820px] flex h-[32px] w-[820px] items-center justify-end ${sunk}`}>
              <T w={37} className="mr-[9px]">216%</T>
              <div className={`flex h-[30px] w-[83px] items-center ${raised}`}>
                <T w={18} className="ml-[6px]">Fit</T>
                <span className="ml-[7px] h-[18px] w-px bg-[#a0a0a0]" />
                <T w={36} className="ml-[8px]">100%</T>
              </div>
            </div>
            <div className={`ml-[3px] flex h-[32px] w-[34px] items-center justify-center ${sunk}`}><MagIcon /></div>
            <div className={`ml-[2px] flex h-[32px] w-[104px] items-center ${sunk}`}>
              <span className="ml-px h-[3px] w-[37px] border-t-2 border-b border-t-[#808080] border-b-white" />
              <span className={`h-[30px] w-[13px] ${raised}`} />
              <span className="h-[3px] w-[49px] border-t-2 border-b border-t-[#808080] border-b-white" />
            </div>
            <div className={`ml-[2px] flex h-[32px] w-[32px] items-center justify-center ${sunk}`}><MagIcon plus /></div>
          </div>
        </div>

        <div className="h-full flex-1 border-r-2 border-[#1a120c] bg-[linear-gradient(180deg,#251a11_0%,#2b1e13_12%,#3a291b_25%,#46321f_45%,#4a3624_58%,#46301f_70%,#5a3c2a_79%,#6a4630_85%,#3a2518_91%,#24150d_95%,#3a2416_100%)]" />
      </div>

      {/* taskbar */}
      <div className="flex h-[60px] shrink-0 items-center border-t border-[#4a4442] bg-[linear-gradient(90deg,#2b1d18,#2b1f1b_30%,#241f1f_50%,#271f1d)] text-white">
        <span className="mb-[4px] ml-[25px] flex"><Weather /></span>
        <div className="mb-[4px] ml-[9px] flex w-[100px] flex-col leading-[20px]">
          <T w={31} className="self-start text-[15px]">34°C</T>
          <T w={81} className="self-start text-[15px] text-[#c4bfbd]">Partly sunny</T>
        </div>
        <span className="ml-[311px] flex"><WinIcon /></span>
        <div className="ml-[18px] flex h-[38px] w-[273px] items-center rounded-full bg-[#f2f2f2] pr-[7px] pl-[14px]">
          <Svg s={19}><circle cx="8" cy="8" r="6.500" stroke="#222" strokeWidth="2" /><path d="M12.500 13l5 5" stroke="#222" strokeWidth="2.300" /></Svg>
          <T w={52} className="ml-[12px] text-[16px] text-[#606060]">Search</T>
          <span className="ml-auto flex"><BingIcon /></span>
        </div>
        <div className="mb-px ml-[16px] flex items-center gap-[25px]">
          <TaskViewIcon />
          <ChatIcon />
          <HelpIcon />
          <InstaIcon />
          <ExplorerIcon />
          <EdgeIcon />
          <StoreIcon />
          <div className="flex h-[30px] w-[30px] items-center justify-center bg-[#0594d3] font-['Lato',sans-serif] leading-none italic">
            <span className="text-[10px] font-bold">my</span>
            <span className="inline-block w-[13px] scale-y-125 text-[14px] font-bold tracking-[-1px]">hp</span>
          </div>
          <ChromeIcon />
          <CodeIcon />
          <div className="flex h-[30px] w-[30px] items-center justify-center bg-black font-['Liberation_Sans',sans-serif] text-[23px] font-bold text-[#e50914]">
            <span className="inline-block scale-x-[.65]">N</span>
          </div>
        </div>
        <div className="ml-[15px] flex h-[50px] w-[50px] flex-col items-center rounded-[5px] border border-[#46403e] bg-[#342c2a] pt-[13px]">
          <AppWindowIcon />
          <span className="mt-[9px] h-[4px] w-[20px] shrink-0 rounded-full bg-[#4cc2ff]" />
        </div>
        <Svg w={15} h={9} className="ml-[139px]"><path d="M1 8l6.500-6.500L14 8" stroke="#fff" strokeWidth="1.800" /></Svg>
        <div className="mb-[3px] ml-[26px] flex w-[29px] flex-col items-center leading-[20px]"><T w={29}>ENG</T><T w={15}>IN</T></div>
        <Svg w={21} h={18} className="mb-[2px] ml-[22px]">
          <path d="M1 6.500c5.500-5.500 13.500-5.500 19 0M4 10c4-4 9-4 13 0M7 13c2.500-2.300 4.500-2.300 7 0" stroke="#fff" strokeWidth="1.600" />
          <circle cx="10.500" cy="15.500" r="1.800" fill="#fff" />
        </Svg>
        <Svg w={21} h={18} className="mb-[2px] ml-[9px]">
          <path d="M1 6.500h3.500L9 2v14l-4.500-4.500H1z" stroke="#fff" strokeWidth="1.400" strokeLinejoin="round" />
          <path d="M11 6.500c1.500 1.500 1.500 3.500 0 5M13.500 4c3 3 3 7 0 10" stroke="#fff" strokeWidth="1.400" />
          <path d="M16 2c4 4 4 10 0 14" stroke="#777" strokeWidth="1.400" />
        </Svg>
        <Svg w={21} h={18} className="mb-[2px] ml-[9px]">
          <path d="M8 4.500h8.500c1 0 1.500.5 1.500 1.500v7c0 1-.5 1.500-1.500 1.500h-13c-1 0-1.500-.5-1.500-1.500V9" stroke="#fff" strokeWidth="1.500" />
          <path d="M19 7.500h1.500v4H19zM4 8.500h7l-3 4.500H4z" fill="#fff" />
          <path d="M4 0L1 6h3l-1.500 5L8 4H5l1-4z" fill="#fff" />
        </Svg>
        <div className="mb-[4px] ml-[20px] flex w-[78px] flex-col items-end leading-[20px]"><T w={36}>13:57</T><T w={78}>24-08-2023</T></div>
        <div className="mb-px ml-[9px] flex h-[20px] w-[20px] items-center justify-center rounded-full bg-[#4cc2ff] text-[13px] leading-[20px] text-[#12303f]">3</div>
      </div>
    </div>
  );
}
